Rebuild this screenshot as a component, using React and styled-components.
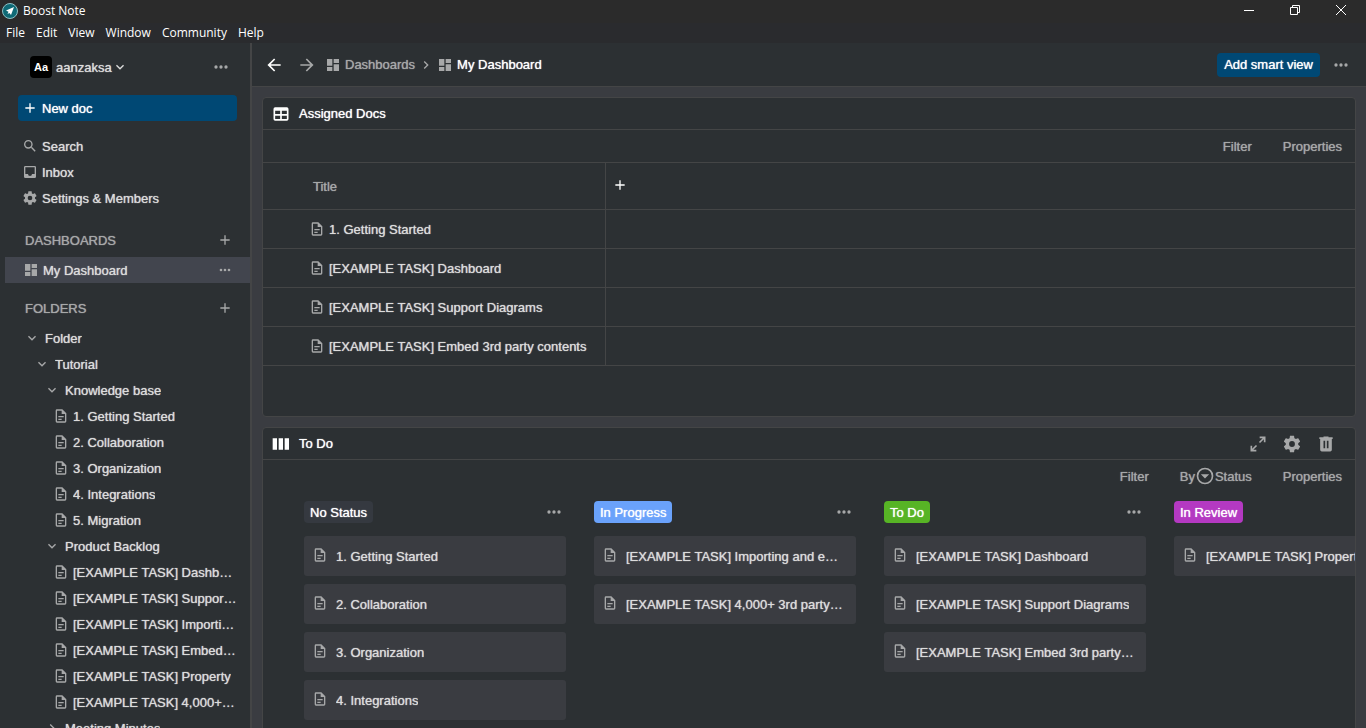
import React from "react";
import styled, { createGlobalStyle } from "styled-components";

const c = {
  titlebar: "#2b2b2b",
  menubar: "#2a2b2e",
  panel: "#2c3033",
  canvas: "#3a3c41",
  border: "#444546",
  selected: "#42454e",
  primary: "#004874",
  text: "#dcdcdc",
  bright: "#ffffff",
  muted: "#a7a8a9",
};

const GlobalStyle = createGlobalStyle`
  *, *::before, *::after { box-sizing: border-box; }
  body {
    margin: 0;
    background: ${c.panel};
    color: ${c.text};
    font-family: "Liberation Sans", Arial, sans-serif;
    font-size: 13px;
    line-height: 17px;
    overflow: hidden;
  }
  button {
    margin: 0;
    padding: 0;
    border: 0;
    background: none;
    color: inherit;
    font: inherit;
    text-shadow: inherit;
    cursor: pointer;
  }
  a { color: inherit; text-decoration: none; }
  ul { margin: 0; padding: 0; list-style: none; }
  h2, h3 { margin: 0; font: inherit; }
`;

const paths = {
  dashboard: "M13,3V9H21V3M13,21H21V11H13M3,21H11V15H3M3,13H11V3H3V13Z",
  doc: "M6,2A2,2 0 0,0 4,4V20A2,2 0 0,0 6,22H18A2,2 0 0,0 20,20V8L14,2H6M6,4H13V9H18V20H6V4M8,12V14H16V12H8M8,16V18H13V16H8Z",
  search:
    "M9.5,3A6.5,6.5 0 0,1 16,9.5C16,11.11 15.41,12.59 14.44,13.73L14.71,14H15.5L20.5,19L19,20.5L14,15.5V14.71L13.73,14.44C12.59,15.41 11.11,16 9.5,16A6.5,6.5 0 0,1 3,9.5A6.5,6.5 0 0,1 9.5,3M9.5,5C7,5 5,7 5,9.5C5,12 7,14 9.5,14C12,14 14,12 14,9.5C14,7 12,5 9.5,5Z",
  inbox:
    "M19,15H15A3,3 0 0,1 12,18A3,3 0 0,1 9,15H5V5H19M19,3H5C3.89,3 3,3.9 3,5V19A2,2 0 0,0 5,21H19A2,2 0 0,0 21,19V5A2,2 0 0,0 19,3Z",
  cog: "M12,15.5A3.5,3.5 0 0,1 8.5,12A3.5,3.5 0 0,1 12,8.5A3.5,3.5 0 0,1 15.5,12A3.5,3.5 0 0,1 12,15.5M19.43,12.97C19.47,12.65 19.5,12.33 19.5,12C19.5,11.67 19.47,11.34 19.43,11L21.54,9.37C21.73,9.22 21.78,8.95 21.66,8.73L19.66,5.27C19.54,5.05 19.27,4.96 19.05,5.05L16.56,6.05C16.04,5.66 15.5,5.32 14.87,5.07L14.5,2.42C14.46,2.18 14.25,2 14,2H10C9.75,2 9.54,2.18 9.5,2.42L9.13,5.07C8.5,5.32 7.96,5.66 7.44,6.05L4.95,5.05C4.73,4.96 4.46,5.05 4.34,5.27L2.34,8.73C2.21,8.95 2.27,9.22 2.46,9.37L4.57,11C4.53,11.34 4.5,11.67 4.5,12C4.5,12.33 4.53,12.65 4.57,12.97L2.46,14.63C2.27,14.78 2.21,15.05 2.34,15.27L4.34,18.73C4.46,18.95 4.73,19.03 4.95,18.95L7.44,17.94C7.96,18.34 8.5,18.68 9.13,18.93L9.5,21.58C9.54,21.82 9.75,22 10,22H14C14.25,22 14.46,21.82 14.5,21.58L14.87,18.93C15.5,18.67 16.04,18.34 16.56,17.94L19.05,18.95C19.27,19.03 19.54,18.95 19.66,18.73L21.66,15.27C21.78,15.05 21.73,14.78 21.54,14.63L19.43,12.97Z",
  dots: "M16,12A2,2 0 0,1 18,10A2,2 0 0,1 20,12A2,2 0 0,1 18,14A2,2 0 0,1 16,12M10,12A2,2 0 0,1 12,10A2,2 0 0,1 14,12A2,2 0 0,1 12,14A2,2 0 0,1 10,12M4,12A2,2 0 0,1 6,10A2,2 0 0,1 8,12A2,2 0 0,1 6,14A2,2 0 0,1 4,12Z",
  plus: "M19,13H13V19H11V13H5V11H11V5H13V11H19V13Z",
  down: "M7.41,8.58L12,13.17L16.59,8.58L18,10L12,16L6,10L7.41,8.58Z",
  right: "M8.59,16.58L13.17,12L8.59,7.41L10,6L16,12L10,18L8.59,16.58Z",
  arrowLeft: "M20,11V13H8L13.5,18.5L12.08,19.92L4.16,12L12.08,4.08L13.5,5.5L8,11H20Z",
  arrowRight: "M4,11V13H16L10.5,18.5L11.92,19.92L19.84,12L11.92,4.08L10.5,5.5L16,11H4Z",
  table:
    "M5,4H19A2,2 0 0,1 21,6V18A2,2 0 0,1 19,20H5A2,2 0 0,1 3,18V6A2,2 0 0,1 5,4M5,8V12H11V8H5M13,8V12H19V8H13M5,14V18H11V14H5M13,14V18H19V14H13Z",
  columns: "M2,5H7.2V19H2ZM9.2,5H14.4V19H9.2ZM16.4,5H21.6V19H16.4Z",
  expand:
    "M10,21V19H6.41L10.91,14.5L9.5,13.09L5,17.59V14H3V21H10M14.5,10.91L19,6.41V10H21V3H14V5H17.59L13.09,9.5L14.5,10.91Z",
  trash:
    "M9,3V4H4V6H5V19A2,2 0 0,0 7,21H17A2,2 0 0,0 19,19V6H20V4H15V3H9M9,8H11V17H9V8M13,8H15V17H13V8Z",
  dropCircle:
    "M12,20A8,8 0 0,1 4,12A8,8 0 0,1 12,4A8,8 0 0,1 20,12A8,8 0 0,1 12,20M12,22A10,10 0 0,0 22,12A10,10 0 0,0 12,2A10,10 0 0,0 2,12A10,10 0 0,0 12,22M7,10L12,15L17,10H7Z",
};

const Svg = styled.svg`
  display: block;
  flex: none;
  fill: ${(p) => p.$color || c.muted};
`;

function Icon({ name, size = 16, color }) {
  return (
    <Svg width={size} height={size} viewBox="0 0 24 24" $color={color} aria-hidden="true">
      <path d={paths[name]} />
    </Svg>
  );
}

const Window = styled.div`
  display: flex;
  flex-direction: column;
  height: 100vh;
`;

const TitleBar = styled.header`
  flex: none;
  display: flex;
  align-items: center;
  height: 23px;
  padding: 0 2px 1px;
  background: ${c.titlebar};
  color: ${c.bright};
  font-family: "Open Sans", sans-serif;
  font-size: 12px;
  line-height: 16px;
`;

const AppName = styled.span`
  flex: 1;
  padding-left: 5px;
`;

const WindowButton = styled.button`
  display: flex;
  align-items: center;
  justify-content: center;
  width: 46px;
  height: 20px;
  margin-bottom: 2px;
`;

const Line = styled.svg`
  display: block;
  fill: none;
  stroke: #fff;
`;

const MenuBar = styled.nav`
  flex: none;
  display: flex;
  gap: 11px;
  align-items: center;
  height: 20px;
  padding-left: 6px;
  background: ${c.menubar};
  color: ${c.bright};
  font-family: "Open Sans", sans-serif;
  font-size: 12px;
  line-height: 16px;
`;

const Body = styled.div`
  flex: 1;
  display: flex;
  min-height: 0;
  text-shadow: 0 0 1px currentColor;
`;

const Sidebar = styled.aside`
  flex: none;
  width: 252px;
  overflow: hidden;
  background: ${c.panel};
  border-right: 2px solid ${c.border};
`;

const Space = styled.div`
  display: flex;
  align-items: center;
  justify-content: space-between;
  height: 48px;
  padding: 0 19px 0 30px;
`;

const SpaceButton = styled.button`
  display: flex;
  align-items: center;
`;

const Avatar = styled.span`
  width: 22px;
  margin-right: 4px;
  border-radius: 4px;
  background: #000;
  color: #fff;
  font-size: 11px;
  font-weight: 700;
  line-height: 22px;
  text-shadow: none;
`;

const NewDoc = styled.button`
  display: flex;
  align-items: center;
  gap: 4px;
  width: 219px;
  height: 26px;
  margin: 4px 0 12px 18px;
  padding-left: 4px;
  border-radius: 4px;
  background: ${c.primary};
  color: ${c.bright};
`;

const NavLink = styled.a`
  display: flex;
  align-items: center;
  gap: 4px;
  height: 26px;
  padding-left: 22px;
`;

const SectionHead = styled.div`
  display: flex;
  align-items: center;
  justify-content: space-between;
  height: 26px;
  margin: ${(p) => p.$margin};
  padding: 0 17px 0 25px;
  color: ${c.muted};
`;

const Selected = styled.div`
  display: flex;
  align-items: center;
  justify-content: space-between;
  height: 26px;
  margin-left: 5px;
  padding: 0 17px 0 18px;
  background: ${c.selected};
`;

const SelectedLink = styled.a`
  display: flex;
  align-items: center;
  gap: 4px;
`;

const TreeItem = styled.a`
  display: flex;
  align-items: center;
  gap: ${(p) => (p.$folder ? 5 : 4)}px;
  height: 26px;
  padding-left: ${(p) => p.$indent}px;
  padding-right: 13px;
`;

const Ellipsis = styled.span`
  min-width: 0;
  overflow: hidden;
  text-overflow: ellipsis;
  white-space: nowrap;
`;

const Main = styled.main`
  flex: 1;
  display: flex;
  flex-direction: column;
  min-width: 0;
  background: ${c.canvas};
`;

const TopBar = styled.div`
  flex: none;
  display: flex;
  align-items: center;
  height: 44px;
  padding: 0 15px 0 12px;
  border-bottom: 1px solid ${c.border};
  background: ${c.panel};
`;

const History = styled.div`
  display: flex;
  gap: 13px;
  margin-right: 8px;
`;

const Crumbs = styled.nav`
  flex: 1;
  display: flex;
  align-items: center;
  gap: 3px;
`;

const Crumb = styled.a`
  display: flex;
  align-items: center;
  gap: 4px;
  color: ${(p) => (p.$current ? c.bright : c.muted)};
`;

const Primary = styled.button`
  height: 24px;
  margin-right: 11px;
  padding: 0 7px;
  border-radius: 4px;
  background: ${c.primary};
  color: ${c.bright};
`;

const Views = styled.div`
  flex: 1;
  display: flex;
  flex-direction: column;
  gap: 10px;
  min-height: 0;
  padding: 10px 10px 0;
  overflow: hidden;
`;

const Panel = styled.section`
  flex: none;
  min-height: 320px;
  border: 1px solid ${c.border};
  border-radius: 4px;
  background: ${c.panel};
  overflow: hidden;
`;

const PanelHead = styled.div`
  display: flex;
  align-items: center;
  height: 32px;
  padding: 0 19px 0 8px;
  border-bottom: 1px solid ${c.border};
  color: ${c.bright};
`;

const PanelTitle = styled.h2`
  flex: 1;
  padding-left: 8px;
`;

const PanelActions = styled.div`
  display: flex;
  gap: 14px;
`;

const Toolbar = styled.div`
  display: flex;
  align-items: center;
  justify-content: flex-end;
  gap: 31px;
  height: 33px;
  padding-right: 13px;
  border-bottom: 1px solid ${(p) => (p.$plain ? "transparent" : c.border)};
  color: ${c.muted};
`;

const ToolButton = styled.button`
  display: flex;
  align-items: center;
`;

const Table = styled.table`
  width: 100%;
  border-collapse: separate;
  border-spacing: 0;
  table-layout: fixed;

  th, td {
    height: 39px;
    padding: 0;
    border-bottom: 1px solid ${c.border};
    font-weight: 400;
    text-align: left;
    vertical-align: middle;
  }
  th { height: 47px; color: ${c.muted}; }
  th:first-child, td:first-child {
    width: 343px;
    border-right: 1px solid ${c.border};
  }
  th:first-child { padding-left: 50px; }
  th:last-child { padding: 0 0 2px 6px; }
  td:first-child { padding-left: 46px; }
`;

const AddColumn = styled.button`
  display: block;
`;

const DocLink = styled.a`
  display: flex;
  align-items: center;
  gap: 4px;
`;

const Board = styled.div`
  display: flex;
  gap: 28px;
  padding: 6px 0 30px 41px;
`;

const Column = styled.section`
  flex: none;
  width: 262px;
`;

const ColumnHead = styled.div`
  display: flex;
  align-items: center;
  justify-content: space-between;
  height: 26px;
  margin-bottom: 11px;
  padding-right: 2px;
`;

const Tag = styled.h3`
  padding: 3px 6px 2px;
  border-radius: 4px;
  background: ${(p) => p.$color};
  color: ${c.bright};
`;

const Cards = styled.ul`
  display: flex;
  flex-direction: column;
  gap: 8px;
`;

const Card = styled.a`
  display: flex;
  align-items: flex-start;
  gap: 8px;
  height: 40px;
  padding: 11px 12px 0 8px;
  border-radius: 3px;
  background: ${c.canvas};
  line-height: 19px;
`;

const tree = [
  ["Folder", 24, "down"],
  ["Tutorial", 34, "down"],
  ["Knowledge base", 44, "down"],
  ["1. Getting Started", 53],
  ["2. Collaboration", 53],
  ["3. Organization", 53],
  ["4. Integrations", 53],
  ["5. Migration", 53],
  ["Product Backlog", 44, "down"],
  ["[EXAMPLE TASK] Dashboard", 53],
  ["[EXAMPLE TASK] Support Diagrams", 53],
  ["[EXAMPLE TASK] Importing and exporting", 53],
  ["[EXAMPLE TASK] Embed 3rd party contents", 53],
  ["[EXAMPLE TASK] Property", 53],
  ["[EXAMPLE TASK] 4,000+ 3rd party integrations", 53],
  ["Meeting Minutes", 44, "right"],
];

const assigned = [
  "1. Getting Started",
  "[EXAMPLE TASK] Dashboard",
  "[EXAMPLE TASK] Support Diagrams",
  "[EXAMPLE TASK] Embed 3rd party contents",
];

const board = [
  {
    name: "No Status",
    color: "#353940",
    docs: ["1. Getting Started", "2. Collaboration", "3. Organization", "4. Integrations"],
  },
  {
    name: "In Progress",
    color: "#6aa2fb",
    docs: ["[EXAMPLE TASK] Importing and exporting", "[EXAMPLE TASK] 4,000+ 3rd party integrations"],
  },
  {
    name: "To Do",
    color: "#57b425",
    docs: [
      "[EXAMPLE TASK] Dashboard",
      "[EXAMPLE TASK] Support Diagrams",
      "[EXAMPLE TASK] Embed 3rd party contents",
    ],
  },
  { name: "In Review", color: "#b439c2", docs: ["[EXAMPLE TASK] Property"] },
];

function Logo() {
  return (
    <svg width="16" height="16" viewBox="0 0 32 32" aria-hidden="true">
      <circle cx="16" cy="16" r="15" fill="#0f6a76" stroke="#8fbfc4" strokeWidth="2" />
      <path d="M24 8L8 15l5 2.500L11 22l4-2 3 4z" fill="#fff" />
    </svg>
  );
}

export default function App() {
  return (
    <Window>
      <GlobalStyle />
      <TitleBar>
        <Logo />
        <AppName>Boost Note</AppName>
        <WindowButton aria-label="Minimize">
          <Line width="10" height="10" viewBox="0 0 10 10"><path d="M0 5.5H10" /></Line>
        </WindowButton>
        <WindowButton aria-label="Restore">
          <Line width="10" height="10" viewBox="0 0 10 10">
            <path d="M.5 2.5H7.5V9.5H.5ZM2.5 2.5V.5H9.5V7.5H7.5" />
          </Line>
        </WindowButton>
        <WindowButton aria-label="Close">
          <Line width="10" height="10" viewBox="0 0 10 10"><path d="M0 0L10 10M10 0L0 10" /></Line>
        </WindowButton>
      </TitleBar>
      <MenuBar>
        {["File", "Edit", "View", "Window", "Community", "Help"].map((m) => (
          <button key={m}>{m}</button>
        ))}
      </MenuBar>
      <Body>
        <Sidebar>
          <Space>
            <SpaceButton>
              <Avatar>Aa</Avatar>
              aanzaksa
              <Icon name="down" color={c.text} />
            </SpaceButton>
            <button aria-label="Space options"><Icon name="dots" size={20} /></button>
          </Space>
          <NewDoc><Icon name="plus" color="#fff" />New doc</NewDoc>
          <NavLink href="#search"><Icon name="search" />Search</NavLink>
          <NavLink href="#inbox"><Icon name="inbox" />Inbox</NavLink>
          <NavLink href="#settings"><Icon name="cog" />Settings &amp; Members</NavLink>
          <SectionHead $margin="16px 0 4px">
            <h2>DASHBOARDS</h2>
            <button aria-label="Add dashboard"><Icon name="plus" /></button>
          </SectionHead>
          <Selected>
            <SelectedLink href="#dashboard"><Icon name="dashboard" />My Dashboard</SelectedLink>
            <button aria-label="Dashboard options"><Icon name="dots" /></button>
          </Selected>
          <SectionHead $margin="12px 0 4px">
            <h2>FOLDERS</h2>
            <button aria-label="Add folder"><Icon name="plus" /></button>
          </SectionHead>
          <ul>
            {tree.map(([label, indent, chevron]) => (
              <li key={label}>
                <TreeItem href="#doc" $indent={indent} $folder={!!chevron}>
                  <Icon name={chevron || "doc"} />
                  <Ellipsis>{label}</Ellipsis>
                </TreeItem>
              </li>
            ))}
          </ul>
        </Sidebar>
        <Main>
          <TopBar>
            <History>
              <button aria-label="Back"><Icon name="arrowLeft" size={20} color="#fff" /></button>
              <button aria-label="Forward"><Icon name="arrowRight" size={20} /></button>
            </History>
            <Crumbs>
              <Crumb href="#dashboards"><Icon name="dashboard" />Dashboards</Crumb>
              <Icon name="right" />
              <Crumb href="#dashboard" $current><Icon name="dashboard" />My Dashboard</Crumb>
            </Crumbs>
            <Primary>Add smart view</Primary>
            <button aria-label="More"><Icon name="dots" size={20} /></button>
          </TopBar>
          <Views>
            <Panel>
              <PanelHead>
                <Icon name="table" size={20} color="#fff" />
                <PanelTitle>Assigned Docs</PanelTitle>
              </PanelHead>
              <Toolbar>
                <ToolButton>Filter</ToolButton>
                <ToolButton>Properties</ToolButton>
              </Toolbar>
              <Table>
                <thead>
                  <tr>
                    <th scope="col">Title</th>
                    <th scope="col">
                      <AddColumn aria-label="Add column"><Icon name="plus" color="#fff" /></AddColumn>
                    </th>
                  </tr>
                </thead>
                <tbody>
                  {assigned.map((doc) => (
                    <tr key={doc}>
                      <td><DocLink href="#doc"><Icon name="doc" />{doc}</DocLink></td>
                      <td />
                    </tr>
                  ))}
                </tbody>
              </Table>
            </Panel>
            <Panel>
              <PanelHead>
                <Icon name="columns" size={20} color="#fff" />
                <PanelTitle>To Do</PanelTitle>
                <PanelActions>
                  <button aria-label="Expand"><Icon name="expand" size={20} /></button>
                  <button aria-label="Settings"><Icon name="cog" size={20} /></button>
                  <button aria-label="Delete"><Icon name="trash" size={20} /></button>
                </PanelActions>
              </PanelHead>
              <Toolbar $plain>
                <ToolButton>Filter</ToolButton>
                <ToolButton>By<Icon name="dropCircle" size={20} />Status</ToolButton>
                <ToolButton>Properties</ToolButton>
              </Toolbar>
              <Board>
                {board.map((col) => (
                  <Column key={col.name}>
                    <ColumnHead>
                      <Tag $color={col.color}>{col.name}</Tag>
                      <button aria-label={`${col.name} options`}><Icon name="dots" size={20} /></button>
                    </ColumnHead>
                    <Cards>
                      {col.docs.map((doc) => (
                        <li key={doc}>
                          <Card href="#doc"><Icon name="doc" /><Ellipsis>{doc}</Ellipsis></Card>
                        </li>
                      ))}
                    </Cards>
                  </Column>
                ))}
              </Board>
            </Panel>
          </Views>
        </Main>
      </Body>
    </Window>
  );
}
